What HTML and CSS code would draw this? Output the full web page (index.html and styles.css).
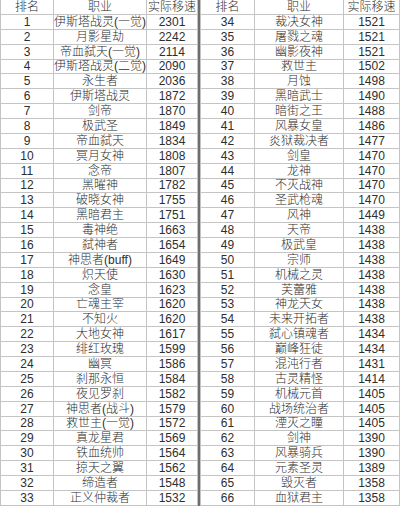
FILE: index.html
```html
<!DOCTYPE html>
<html>
<head>
<meta charset="utf-8">
<link rel="stylesheet" href="styles.css">
</head>
<body>
<div class="sheet">
  <div class="tbl left">
    <div class="c h">排名</div><div class="c h">职业</div><div class="c h">实际移速</div>
    <div class="c n">1</div><div class="c">伊斯塔战灵(一觉)</div><div class="c n">2301</div>
    <div class="c n">2</div><div class="c">月影星劫</div><div class="c n">2242</div>
    <div class="c n">3</div><div class="c">帝血弑天(一觉)</div><div class="c n">2114</div>
    <div class="c n">4</div><div class="c">伊斯塔战灵(二觉)</div><div class="c n">2090</div>
    <div class="c n">5</div><div class="c">永生者</div><div class="c n">2036</div>
    <div class="c n">6</div><div class="c">伊斯塔战灵</div><div class="c n">1872</div>
    <div class="c n">7</div><div class="c">剑帝</div><div class="c n">1870</div>
    <div class="c n">8</div><div class="c">极武圣</div><div class="c n">1849</div>
    <div class="c n">9</div><div class="c">帝血弑天</div><div class="c n">1834</div>
    <div class="c n">10</div><div class="c">冥月女神</div><div class="c n">1808</div>
    <div class="c n">11</div><div class="c">念帝</div><div class="c n">1807</div>
    <div class="c n">12</div><div class="c">黑曜神</div><div class="c n">1782</div>
    <div class="c n">13</div><div class="c">破晓女神</div><div class="c n">1755</div>
    <div class="c n">14</div><div class="c">黑暗君主</div><div class="c n">1751</div>
    <div class="c n">15</div><div class="c">毒神绝</div><div class="c n">1663</div>
    <div class="c n">16</div><div class="c">弑神者</div><div class="c n">1654</div>
    <div class="c n">17</div><div class="c">神思者(buff)</div><div class="c n">1649</div>
    <div class="c n">18</div><div class="c">炽天使</div><div class="c n">1630</div>
    <div class="c n">19</div><div class="c">念皇</div><div class="c n">1623</div>
    <div class="c n">20</div><div class="c">亡魂主宰</div><div class="c n">1620</div>
    <div class="c n">21</div><div class="c">不知火</div><div class="c n">1620</div>
    <div class="c n">22</div><div class="c">大地女神</div><div class="c n">1617</div>
    <div class="c n">23</div><div class="c">绯红玫瑰</div><div class="c n">1599</div>
    <div class="c n">24</div><div class="c">幽冥</div><div class="c n">1586</div>
    <div class="c n">25</div><div class="c">刹那永恒</div><div class="c n">1584</div>
    <div class="c n">26</div><div class="c">夜见罗刹</div><div class="c n">1582</div>
    <div class="c n">27</div><div class="c">神思者(战斗)</div><div class="c n">1579</div>
    <div class="c n">28</div><div class="c">救世主(一觉)</div><div class="c n">1572</div>
    <div class="c n">29</div><div class="c">真龙星君</div><div class="c n">1569</div>
    <div class="c n">30</div><div class="c">铁血统帅</div><div class="c n">1564</div>
    <div class="c n">31</div><div class="c">掠天之翼</div><div class="c n">1562</div>
    <div class="c n">32</div><div class="c">缔造者</div><div class="c n">1548</div>
    <div class="c n">33</div><div class="c">正义仲裁者</div><div class="c n">1532</div>
  </div>
  <div class="sep"></div>
  <div class="tbl right">
    <div class="c h">排名</div><div class="c h">职业</div><div class="c h">实际移速</div>
    <div class="c n">34</div><div class="c">裁决女神</div><div class="c n">1521</div>
    <div class="c n">35</div><div class="c">屠戮之魂</div><div class="c n">1521</div>
    <div class="c n">36</div><div class="c">幽影夜神</div><div class="c n">1521</div>
    <div class="c n">37</div><div class="c">救世主</div><div class="c n">1502</div>
    <div class="c n">38</div><div class="c">月蚀</div><div class="c n">1498</div>
    <div class="c n">39</div><div class="c">黑暗武士</div><div class="c n">1490</div>
    <div class="c n">40</div><div class="c">暗街之王</div><div class="c n">1488</div>
    <div class="c n">41</div><div class="c">风暴女皇</div><div class="c n">1486</div>
    <div class="c n">42</div><div class="c">炎狱裁决者</div><div class="c n">1477</div>
    <div class="c n">43</div><div class="c">剑皇</div><div class="c n">1470</div>
    <div class="c n">44</div><div class="c">龙神</div><div class="c n">1470</div>
    <div class="c n">45</div><div class="c">不灭战神</div><div class="c n">1470</div>
    <div class="c n">46</div><div class="c">圣武枪魂</div><div class="c n">1470</div>
    <div class="c n">47</div><div class="c">风神</div><div class="c n">1449</div>
    <div class="c n">48</div><div class="c">天帝</div><div class="c n">1438</div>
    <div class="c n">49</div><div class="c">极武皇</div><div class="c n">1438</div>
    <div class="c n">50</div><div class="c">宗师</div><div class="c n">1438</div>
    <div class="c n">51</div><div class="c">机械之灵</div><div class="c n">1438</div>
    <div class="c n">52</div><div class="c">芙蕾雅</div><div class="c n">1438</div>
    <div class="c n">53</div><div class="c">神龙天女</div><div class="c n">1438</div>
    <div class="c n">54</div><div class="c">未来开拓者</div><div class="c n">1438</div>
    <div class="c n">55</div><div class="c">弑心镇魂者</div><div class="c n">1434</div>
    <div class="c n">56</div><div class="c">巅峰狂徒</div><div class="c n">1434</div>
    <div class="c n">57</div><div class="c">混沌行者</div><div class="c n">1431</div>
    <div class="c n">58</div><div class="c">古灵精怪</div><div class="c n">1414</div>
    <div class="c n">59</div><div class="c">机械元首</div><div class="c n">1405</div>
    <div class="c n">60</div><div class="c">战场统治者</div><div class="c n">1405</div>
    <div class="c n">61</div><div class="c">湮灭之瞳</div><div class="c n">1405</div>
    <div class="c n">62</div><div class="c">剑神</div><div class="c n">1390</div>
    <div class="c n">63</div><div class="c">风暴骑兵</div><div class="c n">1390</div>
    <div class="c n">64</div><div class="c">元素圣灵</div><div class="c n">1389</div>
    <div class="c n">65</div><div class="c">毁灭者</div><div class="c n">1358</div>
    <div class="c n">66</div><div class="c">血狱君主</div><div class="c n">1358</div>
  </div>
</div>
</body>
</html>
```

FILE: styles.css
```css
html, body {
  margin: 0;
  padding: 0;
  background: #fff;
}
.sheet {
  width: 400px;
  height: 506px;
  overflow: hidden;
  display: flex;
  background: #fff;
}
.tbl {
  display: grid;
  grid-auto-rows: 14.88px;
  border-left: 1px solid #c4c4c4;
}
.left {
  width: 198px;
  grid-template-columns: 53px 93px 1fr;
}
.right {
  width: 200px;
  grid-template-columns: 54px 89px 1fr;
}
.sep {
  width: 2px;
  background: #6e6e6e;
}
.c {
  box-sizing: border-box;
  border-right: 1px solid #c4c4c4;
  border-bottom: 1px solid #c4c4c4;
  display: flex;
  align-items: center;
  justify-content: center;
  font-family: "Liberation Sans", "Noto Sans CJK SC", sans-serif;
  font-size: 12px;
  font-weight: 300;
  color: #2e2e2e;
  white-space: nowrap;
  overflow: hidden;
  line-height: 1;
}
.n {
  font-size: 12px;
}
```
